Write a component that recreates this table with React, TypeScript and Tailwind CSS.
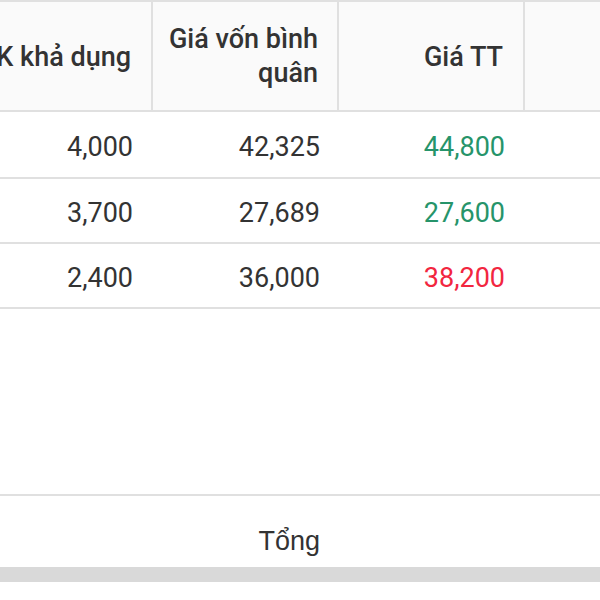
import React from 'react';

type Row = { qty: string; cost: string; price: string; up: boolean };

const ROWS: Row[] = [
  { qty: '4,000', cost: '42,325', price: '44,800', up: true },
  { qty: '3,700', cost: '27,689', price: '27,600', up: true },
  { qty: '2,400', cost: '36,000', price: '38,200', up: false },
];

const cols = 'grid grid-cols-[185px_186px_186px_186px]';

const App: React.FC = () => {
  return (
    <div className="w-[600px] h-[600px] overflow-hidden bg-white font-['Roboto',sans-serif] text-[#333] text-[27px]">
      <div className="ml-[-32px] w-[743px]">
        {/* header */}
        <div className={`${cols} h-[112px] bg-[#fafafa] border-t-2 border-b-2 border-[#e0e0e0] font-medium`}>
          <div className="flex items-center justify-end pt-[3px] pr-5 border-r-2 border-[#e0e0e0] whitespace-nowrap">SLCK khả dụng</div>
          <div className="flex items-center justify-end text-right pr-[19px] leading-[34px] border-r-2 border-[#e0e0e0]">
            Giá vốn bình
            <br />
            quân
          </div>
          <div className="flex items-center justify-end pt-[3px] pr-5 border-r-2 border-[#e0e0e0]">Giá TT</div>
          <div></div>
        </div>

        {/* rows */}
        {ROWS.map((r, i) => (
          <div key={i} className={`${cols} ${i === 0 ? 'h-[67px]' : 'h-[65px]'} pt-[6px] border-b-2 border-[#e0e0e0] items-center`}>
            <div className="text-right pr-5">{r.qty}</div>
            <div className="text-right pr-[19px]">{r.cost}</div>
            <div className={`text-right pr-5 ${r.up ? 'text-[#26946a]' : 'text-[#f2263f]'}`}>{r.price}</div>
            <div></div>
          </div>
        ))}

        <div className="h-[185px]"></div>

        {/* footer */}
        <div className={`${cols} h-[73px] pt-[20px] border-t-2 border-[#e0e0e0] items-center`}>
          <div></div>
          <div className="text-right pr-[19px] font-['Liberation_Sans',sans-serif]">Tổng</div>
          <div></div>
          <div></div>
        </div>
        <div className="h-[15px] bg-[#d9d9d9]"></div>
      </div>
    </div>
  );
};

export default App;
